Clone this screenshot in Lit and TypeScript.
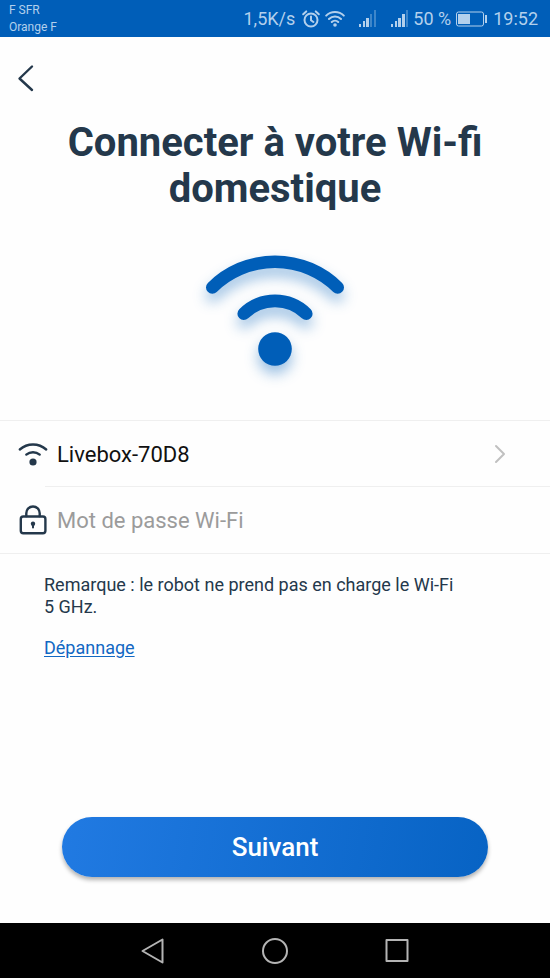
import { LitElement, html, css, svg } from "lit";
import { customElement, state } from "lit/decorators.js";

const signalIcon = () => svg`
  <rect x="0" y="14" width="2" height="3" />
  <rect x="4" y="11" width="2" height="6" />
  <rect x="7" y="8" width="3" height="9" />`;

@customElement("status-bar")
class StatusBar extends LitElement {
  static styles = css`
    :host {
      display: flex;
      justify-content: space-between;
      align-items: center;
      box-sizing: border-box;
      height: 37px;
      padding: 0 12px 0 9px;
      background: #005eb8;
      color: #b3d0ec;
    }
    .carriers {
      font-size: 12px;
      line-height: 17px;
    }
    .right {
      display: flex;
      align-items: center;
      font-size: 18px;
      line-height: 20px;
      white-space: nowrap;
    }
    svg {
      display: block;
      fill: currentColor;
    }
    .line {
      fill: none;
      stroke: currentColor;
      stroke-width: 2;
      stroke-linecap: round;
    }
    .faint {
      opacity: 0.35;
    }
    .alarm {
      margin-left: 7px;
    }
    .wifi {
      margin-left: 5px;
    }
    .signal {
      margin-left: 14px;
    }
    .percent {
      margin-left: 4px;
    }
    .battery {
      margin: 0 5px;
    }
  `;

  render() {
    return html`
      <div class="carriers">
        <div>F SFR</div>
        <div>Orange F</div>
      </div>
      <div class="right">
        <span>1,5K/s</span>
        <svg class="alarm" width="18" height="18" viewBox="0 0 18 18">
          <g class="line">
            <circle cx="9" cy="10" r="6.5" />
            <path d="M9 6.5V10.2L11.4 12M1.2 4.2L4.2 1.4M16.8 4.2L13.8 1.4" />
          </g>
        </svg>
        <svg class="wifi" width="20" height="17" viewBox="0 0 20 17">
          <g class="line">
            <path d="M1.2 5.6A12.5 12.5 0 0 1 18.8 5.6M4 9A8.5 8.5 0 0 1 16 9M6.8 12A4.6 4.6 0 0 1 13.2 12" />
          </g>
          <circle cx="10" cy="15" r="1.8" />
        </svg>
        <svg class="signal" width="18" height="17" viewBox="0 0 18 17">
          ${signalIcon()}
          <g class="faint">
            <rect x="11" y="4" width="2" height="13" />
            <rect x="15" y="0" width="2" height="17" />
          </g>
        </svg>
        <svg class="signal" width="18" height="17" viewBox="0 0 18 17">
          ${signalIcon()}
          <rect x="11" y="4" width="3" height="13" />
          <rect class="faint" x="15" y="0" width="2" height="17" />
        </svg>
        <span class="percent">50 %</span>
        <svg class="battery" width="32" height="16" viewBox="0 0 32 16">
          <rect x="0.5" y="1" width="27" height="14" rx="2" fill="none" stroke="currentColor" />
          <rect x="2" y="3" width="12" height="10" />
          <rect x="29" y="4" width="2" height="8" />
        </svg>
        <span>19:52</span>
      </div>
    `;
  }
}

@customElement("nav-bar")
class NavBar extends LitElement {
  static styles = css`
    :host {
      display: flex;
      justify-content: center;
      align-items: center;
      gap: 94px;
      height: 55px;
      background: #000;
    }
    button {
      padding: 0;
      border: 0;
      background: none;
      color: #b4b4b4;
    }
    svg {
      display: block;
      fill: none;
      stroke: currentColor;
      stroke-width: 2;
      stroke-linejoin: round;
    }
  `;

  render() {
    return html`
      <button aria-label="Retour">
        <svg width="28" height="28" viewBox="0 0 28 28"><path d="M23.5 2.5V25.5L3.5 14Z" /></svg>
      </button>
      <button aria-label="Accueil">
        <svg width="28" height="28" viewBox="0 0 28 28"><circle cx="14" cy="14" r="12" /></svg>
      </button>
      <button aria-label="Applications récentes">
        <svg width="28" height="28" viewBox="0 0 28 28"><rect x="3.5" y="3" width="21" height="21" /></svg>
      </button>
    `;
  }
}

@customElement("app-root")
class AppRoot extends LitElement {
  @state() password = "";

  static styles = css`
    :host {
      display: flex;
      flex-direction: column;
      min-height: 100vh;
      background: #fefefe;
      color: #24384b;
      font-family: Roboto, sans-serif;
    }
    main {
      flex: 1;
      display: flex;
      flex-direction: column;
    }
    button,
    input {
      font-family: inherit;
      border: 0;
      background: none;
      padding: 0;
      color: inherit;
    }
    svg {
      display: block;
      fill: none;
      stroke: currentColor;
      stroke-linecap: round;
      stroke-linejoin: round;
    }
    .dot {
      fill: currentColor;
      stroke: none;
    }
    .back {
      align-self: flex-start;
      margin: 26px 16px 0;
    }
    h1 {
      margin: 27px 56px 0;
      font-size: 40px;
      line-height: 46px;
      font-weight: 700;
      text-align: center;
    }
    .hero {
      align-self: center;
      margin-top: 28px;
      color: #005eb8;
      overflow: visible;
      filter: drop-shadow(0 8px 7px rgba(0, 94, 184, 0.4));
    }
    .network {
      margin-top: 30px;
      border-top: 1px solid #efefef;
      border-bottom: 1px solid #efefef;
    }
    .row {
      display: flex;
      align-items: center;
      box-sizing: border-box;
      width: 100%;
      height: 66px;
      padding: 0 43px 0 18px;
      gap: 9px;
      font-size: 22px;
      text-align: left;
    }
    .ssid {
      flex: 1;
      color: #111;
    }
    .chevron {
      color: #c0c0c0;
    }
    .divider {
      height: 1px;
      margin: -1px 0 0 45px;
      border: 0;
      background: #efefef;
    }
    input {
      flex: 1;
      min-width: 0;
      font-size: 22px;
      outline: none;
    }
    input::placeholder {
      color: #9b9b9b;
      opacity: 1;
    }
    .notes {
      margin: 20px 44px 0;
      font-size: 18px;
      line-height: 22px;
    }
    p {
      margin: 0 0 19px;
    }
    a {
      color: #1268c3;
      text-underline-offset: 2px;
    }
    .next {
      height: 60px;
      margin: auto 62px 46px;
      border-radius: 30px;
      background: linear-gradient(100deg, #217ae2, #0763c4);
      box-shadow: 0 3px 4px rgba(0, 0, 0, 0.3);
      color: #fff;
      font-size: 26px;
      font-weight: 500;
    }
  `;

  private onInput(e: Event) {
    this.password = (e.target as HTMLInputElement).value;
  }

  render() {
    return html`
      <status-bar></status-bar>
      <main>
        <button class="back" aria-label="Retour">
          <svg width="20" height="30" viewBox="0 0 20 30" stroke-width="2.4">
            <path d="M16 3.5L3.5 15.5L16 27" />
          </svg>
        </button>
        <h1>Connecter à votre Wi-fi domestique</h1>
        <svg class="hero" width="170" height="150" viewBox="0 0 170 150" stroke-width="12.6">
          <path d="M22.3 47.4A89.3 89.3 0 0 1 147.7 47.4M53.7 73.7A44.6 44.6 0 0 1 116.3 73.7" />
          <circle class="dot" cx="85" cy="109" r="16.8" />
        </svg>
        <section class="network">
          <button class="row">
            <svg width="30" height="26" viewBox="0 0 30 26" stroke-width="2.4">
              <path d="M1.8 8.5A20 20 0 0 1 28.2 8.5M8.3 13.6A10.5 10.5 0 0 1 21.7 13.6" />
              <circle class="dot" cx="15" cy="21" r="3.6" />
            </svg>
            <span class="ssid">Livebox-70D8</span>
            <svg class="chevron" width="14" height="20" viewBox="0 0 14 20" stroke-width="2">
              <path d="M3 2L11 10L3 18" />
            </svg>
          </button>
          <hr class="divider" />
          <div class="row">
            <svg width="30" height="30" viewBox="0 0 30 30" stroke-width="2.4">
              <rect x="2.8" y="11.5" width="24.6" height="16.8" rx="2.5" />
              <path d="M8.3 11V8.2A6.7 6.7 0 0 1 21.7 8.2V11" />
              <path d="M15 20V22.5" stroke-width="2" />
              <circle class="dot" cx="15" cy="18.8" r="2.2" />
            </svg>
            <input
              type="password"
              aria-label="Mot de passe Wi-Fi"
              placeholder="Mot de passe Wi-Fi"
              .value=${this.password}
              @input=${this.onInput}
            />
          </div>
        </section>
        <div class="notes">
          <p>Remarque : le robot ne prend pas en charge le Wi-Fi 5&nbsp;GHz.</p>
          <a href="#depannage">Dépannage</a>
        </div>
        <button class="next">Suivant</button>
      </main>
      <nav-bar></nav-bar>
    `;
  }
}
